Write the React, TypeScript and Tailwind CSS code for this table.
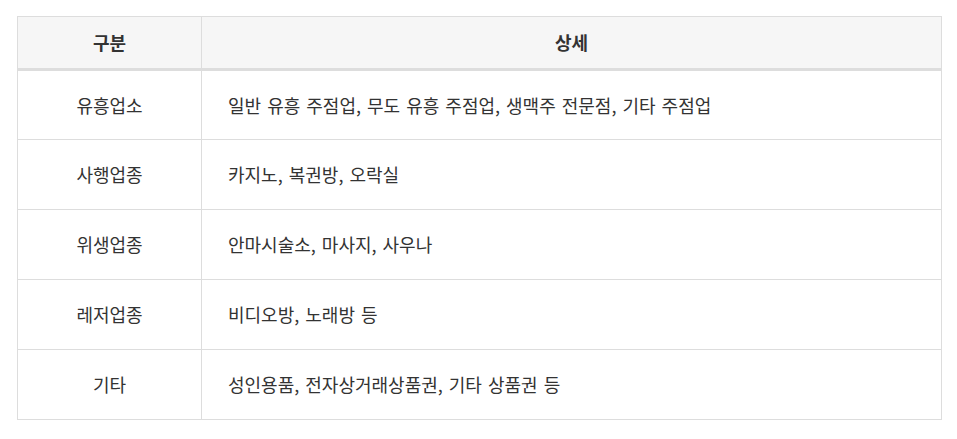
const rows = [
  { type: '유흥업소', detail: '일반 유흥 주점업, 무도 유흥 주점업, 생맥주 전문점, 기타 주점업' },
  { type: '사행업종', detail: '카지노, 복권방, 오락실' },
  { type: '위생업종', detail: '안마시술소, 마사지, 사우나' },
  { type: '레저업종', detail: '비디오방, 노래방 등' },
  { type: '기타', detail: '성인용품, 전자상거래상품권, 기타 상품권 등' },
];

export default function App() {
  return (
    <div className="bg-white w-[957px] h-[439px] pt-4 pl-[17px] font-['Noto_Sans_CJK_KR','Noto_Sans',sans-serif] text-[#333]">
      <table className="w-[925px] border-collapse text-[18px] [word-spacing:2px]">
        <thead>
          <tr className="bg-[#f6f6f6]">
            <th className="w-[184px] h-[53px] border border-[#dddddd] border-b-[3px] font-bold">구분</th>
            <th className="h-[53px] border border-[#dddddd] border-b-[3px] font-bold">상세</th>
          </tr>
        </thead>
        <tbody>
          {rows.map((row) => (
            <tr key={row.type}>
              <td className="h-[70px] border border-[#dddddd] text-center">{row.type}</td>
              <td className="h-[70px] border border-[#dddddd] pl-[26px]">{row.detail}</td>
            </tr>
          ))}
        </tbody>
      </table>
    </div>
  );
}
